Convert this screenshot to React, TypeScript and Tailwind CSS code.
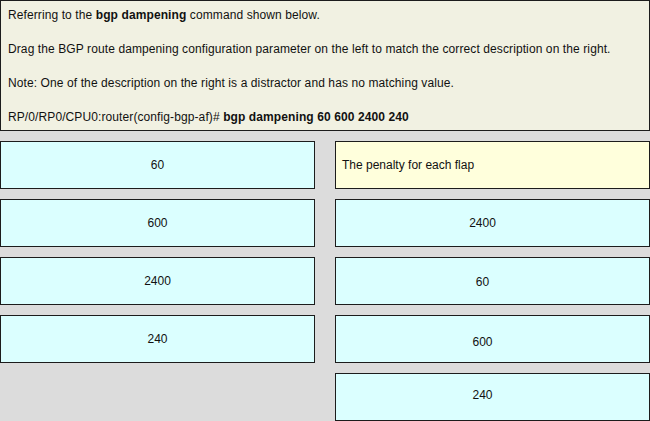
import React from 'react';

const leftItems = ['60', '600', '2400', '240'];

const rightItems: { text: string; kind: 'desc' | 'value'; nudge?: string }[] = [
  { text: 'The penalty for each flap', kind: 'desc' },
  { text: '2400', kind: 'value' },
  { text: '60', kind: 'value', nudge: 'pt-[2px]' },
  { text: '600', kind: 'value', nudge: 'pt-[6px]' },
  { text: '240', kind: 'value', nudge: 'pb-[4px]' },
];

export default function App() {
  return (
    <div
      className="w-[650px] h-[421px] overflow-hidden bg-[#dcdcdc] text-[12px] text-[#111]"
      style={{ fontFamily: '"Liberation Sans", Arial, sans-serif' }}
    >
      {/* Question text */}
      <div className="h-[131px] border border-[#1c1c1c] bg-[#f1f1e2] px-[7px] pt-[7px] flex flex-col gap-[20px] leading-[14px] tracking-[0.1px]">
        <div>
          Referring to the <b>bgp dampening</b> command shown below.
        </div>
        <div>
          Drag the BGP route dampening configuration parameter on the left to match the correct description on the right.
        </div>
        <div>Note: One of the description on the right is a distractor and has no matching value.</div>
        <div>
          RP/0/RP0/CPU0:router(config-bgp-af)# <b>bgp dampening 60 600 2400 240</b>
        </div>
      </div>

      {/* Drag targets */}
      <div className="mt-[10px] grid grid-cols-[315px_315px] gap-x-[20px]">
        <div className="flex flex-col gap-[10px]">
          {leftItems.map((item) => (
            <div
              key={item}
              className="h-[48px] border border-[#1c1c1c] bg-[#dbffff] flex items-center justify-center"
            >
              {item}
            </div>
          ))}
        </div>
        <div className="flex flex-col gap-[10px]">
          {rightItems.map((item, i) =>
            item.kind === 'desc' ? (
              <div
                key={i}
                className="h-[48px] border border-[#1c1c1c] bg-[#ffffdc] flex items-center px-[6px]"
              >
                {item.text}
              </div>
            ) : (
              <div
                key={i}
                className={`h-[48px] border border-[#1c1c1c] bg-[#dbffff] flex items-center justify-center pr-[20px] ${item.nudge ?? ''}`}
              >
                {item.text}
              </div>
            )
          )}
        </div>
      </div>
    </div>
  );
}
